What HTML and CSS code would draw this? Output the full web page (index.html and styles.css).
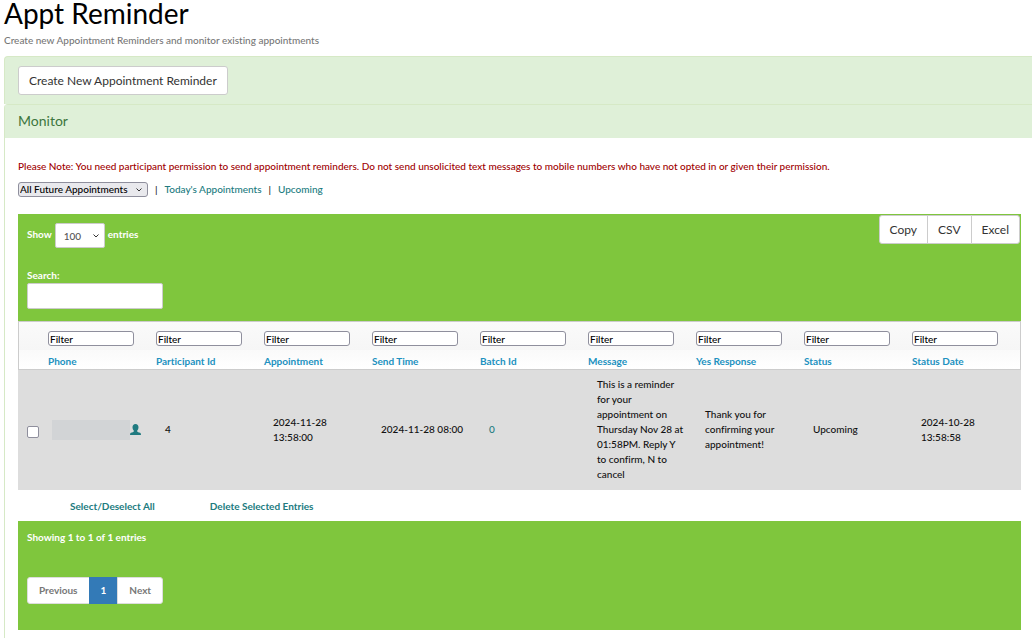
FILE: index.html
```html
<!DOCTYPE html>
<html lang="en">
<head>
<meta charset="utf-8">
<title>Appt Reminder</title>
<link rel="stylesheet" href="styles.css">
</head>
<body>
<header class="page-header">
  <h1 class="page-title">Appt Reminder</h1>
  <p class="page-subtitle">Create new Appointment Reminders and monitor existing appointments</p>
</header>
<main class="panels">
  <section class="panel-create">
    <button type="button" class="btn">Create New Appointment Reminder</button>
  </section>
  <section class="panel-monitor">
    <h2 class="panel-heading">Monitor</h2>
    <div class="panel-body">
      <p class="note">Please Note: You need participant permission to send appointment reminders. Do not send unsolicited text messages to mobile numbers who have not opted in or given their permission.</p>
      <nav class="views">
        <span class="select-wrap">
          <select class="view-select" aria-label="Appointments shown"><option>All Future Appointments</option></select>
          <svg class="chevron" viewBox="0 0 6 4" aria-hidden="true"><path d="M.5 .5 3 3 5.500 .5"/></svg>
        </span>
        <span class="bar">|</span>
        <a href="#today">Today's Appointments</a>
        <span class="bar">|</span>
        <a href="#upcoming">Upcoming</a>
      </nav>
      <div class="grid-wrap">
        <div class="toolbar">
          <div class="toolbar-left">
            <div class="length">
              <label for="length">Show</label>
              <span class="select-wrap">
                <select id="length" class="length-select"><option>100</option></select>
                <svg class="chevron" viewBox="0 0 6 4" aria-hidden="true"><path d="M.5 .5 3 3 5.500 .5"/></svg>
              </span>
              <span>entries</span>
            </div>
            <div class="search">
              <label for="search">Search:</label>
              <input id="search" type="text" class="search-input">
            </div>
          </div>
          <div class="btn-group">
            <button type="button" class="btn">Copy</button>
            <button type="button" class="btn">CSV</button>
            <button type="button" class="btn">Excel</button>
          </div>
        </div>
        <table class="records">
          <colgroup><col class="col-check"><col class="col"><col class="col"><col class="col"><col class="col"><col class="col"><col class="col"><col class="col"><col class="col"><col></colgroup>
          <thead>
            <tr>
              <th></th>
              <th><input class="filter" type="text" value="Filter" aria-label="Filter phone">Phone</th>
              <th><input class="filter" type="text" value="Filter" aria-label="Filter participant id">Participant Id</th>
              <th><input class="filter" type="text" value="Filter" aria-label="Filter appointment">Appointment</th>
              <th><input class="filter" type="text" value="Filter" aria-label="Filter send time">Send Time</th>
              <th><input class="filter" type="text" value="Filter" aria-label="Filter batch id">Batch Id</th>
              <th><input class="filter" type="text" value="Filter" aria-label="Filter message">Message</th>
              <th><input class="filter" type="text" value="Filter" aria-label="Filter yes response">Yes Response</th>
              <th><input class="filter" type="text" value="Filter" aria-label="Filter status">Status</th>
              <th><input class="filter" type="text" value="Filter" aria-label="Filter status date">Status Date</th>
            </tr>
          </thead>
          <tbody>
            <tr>
              <td class="cell-check"><input type="checkbox" class="check" aria-label="Select entry"></td>
              <td class="cell-phone"><div class="phone"><span class="masked"></span><a href="#person" aria-label="Participant"><svg class="person" viewBox="0 0 11 11" aria-hidden="true"><path d="M5.500 0C7.400 0 8.500 1.300 8.500 3.200 8.500 4.600 7.900 5.800 7.200 6.500V7.500C7.400 8.300 10.500 8.500 10.800 9.400L11 11H0L.2 9.400C.5 8.500 3.600 8.300 3.800 7.500V6.500C3.100 5.800 2.500 4.600 2.500 3.200 2.500 1.300 3.600 0 5.500 0Z"/></svg></a></div></td>
              <td>4</td>
              <td class="cell-date">2024-11-28 13:58:00</td>
              <td class="cell-time">2024-11-28 08:00</td>
              <td><a href="#batch">0</a></td>
              <td>This is a reminder for your appointment on Thursday Nov 28 at 01:58PM. Reply Y to confirm, N to cancel</td>
              <td>Thank you for confirming your appointment!</td>
              <td>Upcoming</td>
              <td class="cell-date">2024-10-28 13:58:58</td>
            </tr>
          </tbody>
        </table>
        <div class="bulk">
          <a href="#select">Select/Deselect All</a>
          <a href="#delete">Delete Selected Entries</a>
        </div>
        <footer class="grid-footer">
          <p class="info">Showing 1 to 1 of 1 entries</p>
          <nav class="pagination" aria-label="Pages">
            <a href="#prev">Previous</a><a href="#1" class="active">1</a><a href="#next">Next</a>
          </nav>
        </footer>
      </div>
    </div>
  </section>
</main>
</body>
</html>
```
FILE: styles.css
```css
* { box-sizing: border-box; }
body {
  margin: 0;
  padding-left: 4px;
  background: #fff;
  color: #111;
  font: 500 10px/15px Lato, "Liberation Sans", sans-serif;
  font-variant-ligatures: none;
}
h1, h2, p { margin: 0; font-weight: 400; }
a { color: #217b80; text-decoration: none; }
button, input, select { margin: 0; font-family: inherit; }

.page-header { padding-bottom: 8px; }
.page-title { color: #000; font-size: 28px; line-height: 26px; }
.page-subtitle { margin-top: 7px; color: #777; font-weight: 500; }

.panel-create, .panel-monitor {
  border: 1px solid #d6e9c6;
  border-right: 0;
  border-radius: 4px 0 0 0;
}
.panel-create { padding: 9px 13px; background: #dff0d8; border-bottom: 0; }
.panel-monitor { border-bottom: 0; }
.panel-heading {
  padding: 6px 13px 8px;
  background: #dff0d8;
  color: #3c763d;
  font-size: 14px;
  line-height: 19px;
}
.panel-body { padding: 21px 11px 8px 13px; }

.btn {
  display: block;
  padding: 0 10px;
  border: 1px solid #ccc;
  border-radius: 3px;
  background: #fff;
  color: #333;
  font-size: 12px;
  line-height: 27px;
}
.note { color: #a00000; font-weight: 500; }

.views { display: flex; align-items: center; margin-top: 8px; }
.bar { padding: 0 7px; }
.select-wrap { position: relative; display: inline-flex; }
.chevron {
  position: absolute;
  right: 6px;
  top: 0;
  bottom: 0;
  width: 6px;
  height: 4px;
  margin: auto 0;
  fill: none;
  stroke: #333;
  pointer-events: none;
}
select { appearance: none; }
.view-select {
  width: 130px;
  height: 15px;
  padding: 0 1px;
  border: 1px solid #8f8f9d;
  border-radius: 3px;
  background: #e9e9ed;
  color: #000;
  font-size: 10px;
  font-weight: 500;
  line-height: 13px;
}

.grid-wrap { margin-top: 17px; }
.toolbar {
  display: flex;
  justify-content: space-between;
  align-items: flex-start;
  height: 107px;
  padding: 1px 1px 0 9px;
  background: #7fc63d;
  color: #fff;
  font-weight: 700;
}
.toolbar-left { padding-top: 8px; }
.length { display: flex; gap: 3px; line-height: 23px; }
.length-select {
  width: 50px;
  height: 25px;
  padding: 0 8px;
  border: 1px solid #ccc;
  border-radius: 2px;
  background: #fff;
  color: #555;
  font-size: 10px;
  font-weight: 500;
}
.search { display: grid; margin-top: 20px; }
.search-input {
  width: 136px;
  height: 26px;
  padding: 4px 8px;
  border: 1px solid #ccc;
  border-radius: 2px;
  background: #fff;
  font-size: 10px;
}
.btn-group { display: flex; }
.btn-group .btn { border-radius: 0; }
.btn-group .btn + .btn { margin-left: -1px; }
.btn-group .btn:first-child { border-radius: 3px 0 0 3px; }
.btn-group .btn:last-child { border-radius: 0 3px 3px 0; }

.records { width: 100%; table-layout: fixed; border-spacing: 0; }
.col-check { width: 22px; }
.col { width: 108px; }
.records th {
  padding: 9px 8px 0;
  border-top: 1px solid #ccc;
  border-bottom: 1px solid #ccc;
  background: linear-gradient(#fafafa, #f6f6f6 60%, #fafafa 60%, #fff);
  color: #2191c0;
  text-align: left;
}
.records th:first-child { border-left: 1px solid #ccc; }
.records th:last-child { border-right: 1px solid #ccc; }
.filter {
  display: block;
  width: 86px;
  height: 15px;
  margin-bottom: 8px;
  padding: 0 1px;
  border: 1px solid #8f8f9d;
  border-radius: 3px;
  background: #fff;
  color: #000;
  font-size: 10px;
  font-weight: 500;
  line-height: 13px;
}
.records td { height: 120px; padding: 7px 3px 8px 17px; background: #ddd; vertical-align: middle; }
.records .cell-check { padding: 3px 0 0 9px; }
.records .cell-phone { padding-left: 12px; }
.records .cell-time { white-space: nowrap; }
.records .cell-date { padding-right: 30px; }
.check {
  appearance: none;
  display: block;
  width: 12px;
  height: 12px;
  border: 1px solid #8f8f9d;
  border-radius: 2px;
  background: #fff;
}
.phone { display: flex; align-items: center; }
.masked { width: 78px; height: 20px; background: #d2d4d6; }
.person { display: block; width: 11px; height: 11px; fill: #217b80; }

.bulk { display: flex; gap: 55px; padding: 9px 52px 7px; font-weight: 700; }
.grid-footer { padding: 9px 9px 26px; background: #7fc63d; color: #fff; font-weight: 700; }
.info { font-weight: 700; }
.pagination { display: flex; margin-top: 32px; line-height: 25px; }
.pagination a { padding: 0 11px; border: 1px solid #ddd; background: #fff; color: #777; }
.pagination a + a { margin-left: -1px; }
.pagination a:first-child { border-radius: 3px 0 0 3px; }
.pagination a:last-child { border-radius: 0 3px 3px 0; }
.pagination .active { border-color: #337ab7; background: #337ab7; color: #fff; }
```
